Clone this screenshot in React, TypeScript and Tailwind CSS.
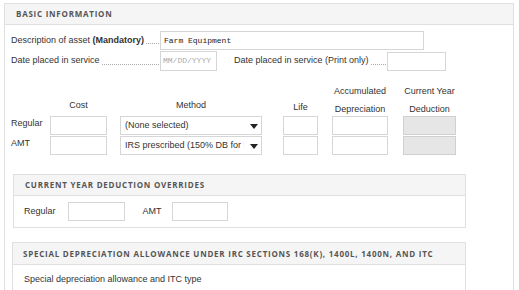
const body = "font-['Liberation_Sans',Arial,sans-serif] text-[9px] text-[#333]";
const head =
  "font-['Open_Sans',sans-serif] font-bold text-[8px] tracking-[0.095em] uppercase text-[#555]";
const input = "h-[19px] border border-[#d6d6d6] bg-white";

function Field({ w, gray }: { w: string; gray?: boolean }) {
  return <div className={`${w} h-[19px] border ${gray ? "border-[#d0d0d0] bg-[#e6e6e6]" : "border-[#d6d6d6] bg-white"}`} />;
}

function Select({ label }: { label: string }) {
  return (
    <div className={`${input} w-[142px] flex items-center pl-[4px] pr-[3px]`}>
      <span className="flex-1 overflow-hidden whitespace-nowrap">{label}</span>
      <svg width="8" height="5" viewBox="0 0 8 5" className="ml-[6px] mt-[2px] shrink-0">
        <path d="M0 0h8L4 5z" fill="#222" />
      </svg>
    </div>
  );
}

// dotted leader between a label and its field
function Dots() {
  return <div className="flex-1 ml-[2px] mr-[1px] mt-[6px] h-[1px] border-t border-dotted border-[#aaa]" />;
}

export default function App() {
  return (
    <div className={`${body} w-[519px] h-[290px] overflow-hidden bg-white pt-[3px] pl-[4px] pr-[5px]`}>
      <div className="border border-[#e0e0e0] h-[300px]">
        {/* Basic information header */}
        <div className="h-[21px] bg-[#f5f5f5] border-b border-[#e0e0e0] flex items-center pl-[11px]">
          <span className={head}>Basic Information</span>
        </div>

        <div className="pl-[6px] pt-[6px]">
          <div className="flex items-center h-[19px]">
            <div className="w-[149px] flex items-center shrink-0">
              <span className="whitespace-nowrap">
                Description of asset <b>(Mandatory)</b>
              </span>
              <Dots />
            </div>
            <div className={`${input} w-[264px] flex items-center pl-[3px] font-['Liberation_Mono',monospace] text-[8px] text-[#222]`}>
              Farm Equipment
            </div>
          </div>

          <div className="flex items-center h-[20px] mt-[1px]">
            <div className="w-[149px] flex items-center shrink-0">
              <span className="whitespace-nowrap">Date placed in service</span>
              <Dots />
            </div>
            <div className={`${input} h-[20px] w-[57px] flex items-center pl-[2px] font-['Liberation_Mono',monospace] text-[8px] text-[#aaa]`}>
              MM/DD/YYYY
            </div>
            <div className="w-[153px] ml-[17px] flex items-center">
              <span className="whitespace-nowrap">Date placed in service (Print only)</span>
              <Dots />
            </div>
            <Field w="w-[59px]" />
          </div>

          {/* Depreciation table */}
          <div className="mt-[11px] grid grid-cols-[39px_70px_163px_49px_71px_53px]">
            <div className="h-[34px]" />
            <div className="w-[57px] h-[34px] text-center leading-[18px] pt-[14px]">Cost</div>
            <div className="w-[142px] h-[34px] text-center leading-[18px] pt-[14px]">Method</div>
            <div className="w-[35px] h-[34px] text-center leading-[18px] pt-[16px]">Life</div>
            <div className="w-[56px] h-[34px] text-center leading-[18px]">
              Accumulated
              <br />
              Depreciation
            </div>
            <div className="w-[53px] h-[34px] text-center leading-[18px]">
              Current Year
              <br />
              Deduction
            </div>

            <div className="leading-[14px]">Regular</div>
            <Field w="w-[57px]" />
            <Select label="(None selected)" />
            <Field w="w-[35px]" />
            <Field w="w-[56px]" />
            <Field w="w-[53px]" gray />

            <div className="leading-[14px] mt-[1px]">AMT</div>
            <div className="mt-[1px]"><Field w="w-[57px]" /></div>
            <div className="mt-[1px]"><Select label="IRS prescribed (150% DB for MACRS)" /></div>
            <div className="mt-[1px]"><Field w="w-[35px]" /></div>
            <div className="mt-[1px]"><Field w="w-[56px]" /></div>
            <div className="mt-[1px]"><Field w="w-[53px]" gray /></div>
          </div>

          {/* Current year deduction overrides */}
          <div className="mt-[19px] ml-[2px] w-[453px] border border-[#e0e0e0]">
            <div className="h-[21px] bg-[#f5f5f5] border-b border-[#e0e0e0] flex items-center pl-[11px]">
              <span className={head}>Current Year Deduction Overrides</span>
            </div>
            <div className="flex items-center h-[31px] pl-[10px]">
              <span>Regular</span>
              <div className="ml-[12px]"><Field w="w-[57px]" /></div>
              <span className="ml-[18px]">AMT</span>
              <div className="ml-[10px]"><Field w="w-[56px]" /></div>
            </div>
          </div>

          {/* Special depreciation allowance */}
          <div className="mt-[14px] ml-[1px] w-[454px] border border-[#e0e0e0]">
            <div className="h-[22px] bg-[#f5f5f5] border-b border-[#e0e0e0] flex items-center pl-[10px]">
              <span className={head}>
                Special Depreciation Allowance under IRC Sections 168(k), 1400L, 1400N, and ITC
              </span>
            </div>
            <div className="pl-[11px] pt-[8px] h-[40px]">Special depreciation allowance and ITC type</div>
          </div>
        </div>
      </div>
    </div>
  );
}
